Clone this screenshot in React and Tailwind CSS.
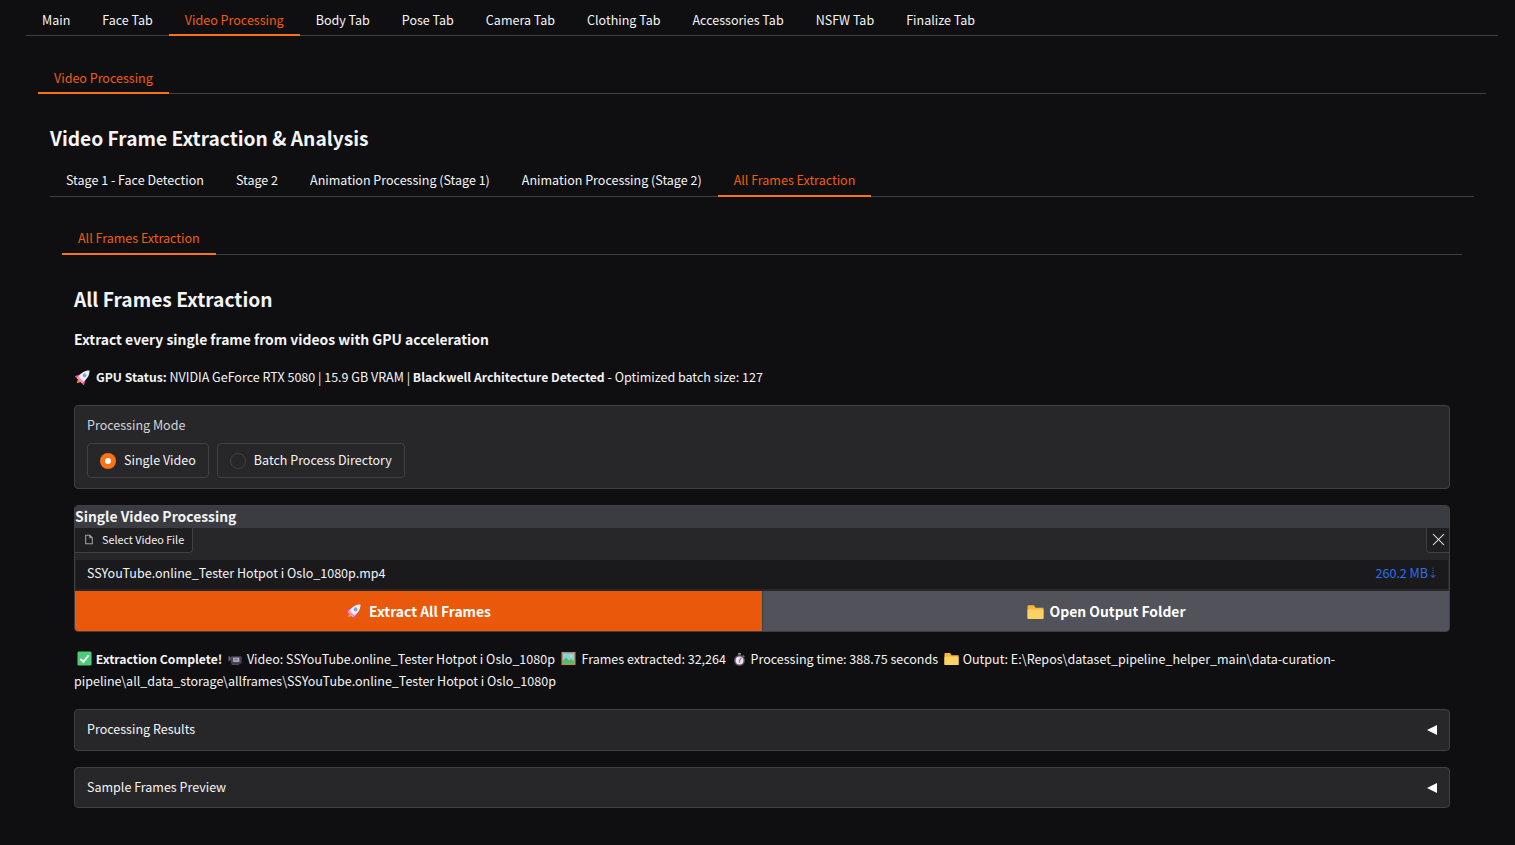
import { X } from "lucide-react";

const Rocket = ({ className }) => (
  <svg viewBox="1 1 14 14" className={className}>
    <g transform="rotate(45 8 8)">
      <path d="M5 7.500 2 13l3.500-.5zM11 7.500l3 5.500-3.500-.5z" fill="#f0468f" />
      <path d="M8 0C5.200 2.500 4.200 6 4.800 12.500h6.400C11.800 6 10.800 2.500 8 0z" fill="#f3eef7" />
      <path d="M4.800 10c-.1.800-.1 1.700 0 2.500h6.400c.1-.8.100-1.700 0-2.500-1.600.8-4.800.8-6.400 0z" fill="#f78fbc" />
      <circle cx="8" cy="6" r="1.700" fill="#7aa7dd" />
      <path d="M6.300 12.500h3.400L8 15.800z" fill="#fb923c" />
    </g>
  </svg>
);

const Check = () => (
  <svg viewBox="0 0 16 16" className="inline-block w-[15px] h-[15px] align-[-2px] ml-[3px] mr-px">
    <rect x="0.500" y="0.500" width="15" height="15" rx="1.500" fill="#4ccb7a" />
    <path d="M3.500 8.500 6.800 11.500 12.500 4.500" fill="none" stroke="#fff" strokeWidth="2" />
  </svg>
);

const Camera = () => (
  <svg viewBox="0 0 16 16" className="inline-block w-[15px] h-[15px] align-[-3px] ml-[3px] mr-px">
    <path d="M0.500 4 3 5.500v3L0.500 10z" fill="#6b6178" />
    <rect x="3" y="4.500" width="11.500" height="8" rx="1" fill="#4a4256" />
    <rect x="5.500" y="6" width="6.500" height="4.500" fill="#b9b2c6" />
    <rect x="6.500" y="7" width="4" height="2" fill="#7d7590" />
    <rect x="4" y="12.500" width="8" height="1.200" fill="#5b5366" />
  </svg>
);

const Picture = () => (
  <svg viewBox="0 0 16 16" className="inline-block w-[15px] h-[15px] align-[-2px] ml-[3px] mr-[3px]">
    <rect x="0.500" y="1" width="15" height="14" fill="#b08d5b" />
    <rect x="2" y="2.500" width="12" height="11" fill="#7fd3ef" />
    <path d="M2 13.500V10l3.500-3 3 3 2-1.500 3.500 2.500v2.500z" fill="#5cb85c" />
    <circle cx="10.500" cy="5.500" r="1.200" fill="#fde047" />
  </svg>
);

const Stopwatch = () => (
  <svg viewBox="0 0 16 16" className="inline-block w-[15px] h-[15px] align-[-3px] ml-[3px] mr-px">
    <rect x="6.500" y="1" width="3" height="2" fill="#8f86a3" />
    <path d="M12 3.200 13.500 4.700 12.600 5.500 11.200 4z" fill="#8f86a3" />
    <circle cx="8" cy="9" r="5.800" fill="#5b5268" />
    <circle cx="8" cy="9" r="4.200" fill="#e9e6ef" />
    <path d="M8 9 10 6M8 9V11.500" stroke="#e0457b" strokeWidth="1.200" />
  </svg>
);

const Folder = ({ className }) => (
  <svg viewBox="0 0 16 16" className={className}>
    <path d="M0.500 3V14a1 1 0 0 0 1 1h13a1 1 0 0 0 1-1V4.500H8L6.500 2H1.500A1 1 0 0 0 0.500 3z" fill="#f5b83d" />
    <path d="M0.500 6h15v8a1 1 0 0 1-1 1h-13a1 1 0 0 1-1-1z" fill="#fdd265" />
  </svg>
);

const Tabs = ({ items, active, className, pad = "pt-1" }) => (
  <div className={`flex border-b border-[#3f3f46] ${className}`}>
    {items.map((t) => (
      <div
        key={t}
        className={
          t === active
            ? `px-4 ${pad} h-[calc(100%+1px)] flex items-center text-[#f15b0d] border-b-2 border-[#f97316]`
            : `px-4 ${pad} h-[calc(100%+1px)] flex items-center text-[#f4f4f5] border-b-2 border-transparent`
        }
      >
        {t}
      </div>
    ))}
  </div>
);

const Radio = ({ label, checked }) => (
  <div className="flex items-center h-[35px] px-3 gap-2 rounded border border-[#3f3f46] bg-[#27272a]">
    {checked ? (
      <div className="w-4 h-4 rounded-full bg-[#f97316] flex items-center justify-center">
        <div className="w-1.5 h-1.5 rounded-full bg-white" />
      </div>
    ) : (
      <div className="w-4 h-4 rounded-full border border-[#3f3f46] bg-[#27272a]" />
    )}
    <span className="text-[#f4f4f5] -mt-[2px]">{label}</span>
  </div>
);

const Accordion = ({ label, className }) => (
  <div className={`flex items-center justify-between pl-3 pr-3 rounded border border-[#3f3f46] bg-[#27272a] ${className}`}>
    <span className="text-[#f4f4f5] -mt-[2px]">{label}</span>
    <span className="w-0 h-0 border-y-[5.500px] border-y-transparent border-r-[10px] border-r-white" />
  </div>
);

const App = () => {
  return (
    <div className="min-h-[845px] bg-[#0f0f11] text-[12.530px] leading-[22px] text-[#f4f4f5] font-['Noto_Sans_CJK_SC',sans-serif] pl-[26px] pr-[17px] overflow-hidden">
      <Tabs
        className="h-[36px]"
        pad="pt-[5px]"
        active="Video Processing"
        items={["Main", "Face Tab", "Video Processing", "Body Tab", "Pose Tab", "Camera Tab", "Clothing Tab", "Accessories Tab", "NSFW Tab", "Finalize Tab"]}
      />

      <div className="px-3 pt-6">
        <Tabs className="h-[34px]" active="Video Processing" items={["Video Processing"]} />

        <div className="px-3 pt-[28px]">
          <h1 className="text-[19.200px] leading-[33px] font-semibold text-[#f4f4f5]">Video Frame Extraction &amp; Analysis</h1>
          <Tabs
            className="h-[35px] mt-[7px]"
            pad="pt-[2px]"
            active="All Frames Extraction"
            items={["Stage 1 - Face Detection", "Stage 2", "Animation Processing (Stage 1)", "Animation Processing (Stage 2)", "All Frames Extraction"]}
          />

          <div className="px-3 pt-6">
            <Tabs className="h-[34px]" pad="pt-[2px]" active="All Frames Extraction" items={["All Frames Extraction"]} />

            <div className="px-3 pt-[28px]">
              <h2 className="text-[19.200px] leading-[33px] font-semibold">All Frames Extraction</h2>
              <p className="mt-[11px] text-[13.900px] leading-[24px] font-semibold">Extract every single frame from videos with GPU acceleration</p>
              <p className="mt-[15px] flex items-center">
                <Rocket className="w-[16px] h-[16px] ml-[1px] mr-[5px]" />
                <span>
                  <b className="font-semibold text-[12.200px]">GPU Status:</b> NVIDIA GeForce RTX 5080 | 15.9 GB VRAM | <b className="font-semibold text-[12.200px]">Blackwell Architecture Detected</b> - Optimized batch size: 127
                </span>
              </p>

              <div className="mt-[17px] h-[84px] rounded border border-[#3f3f46] bg-[#27272a] px-3 pt-[8px]">
                <div className="text-[#d4d4d8]">Processing Mode</div>
                <div className="flex gap-2 mt-[7px]">
                  <Radio label="Single Video" checked />
                  <Radio label="Batch Process Directory" />
                </div>
              </div>

              <div className="mt-4 rounded border border-[#3f3f46] bg-[#27272a] overflow-hidden">
                <div className="h-[22px] bg-[#3b3c42] text-[13.900px] leading-[21px] font-semibold">Single Video Processing</div>
                <div className="flex justify-between h-[25px]">
                  <div className="flex items-center gap-2 pl-[9px] pr-2 pb-[2px] w-[118px] border-r border-b border-[#3f3f46] rounded-br text-[10.800px] whitespace-nowrap bg-[#1f1f22]">
                    <svg viewBox="0 0 24 24" className="w-[10px] h-[11px] shrink-0" fill="none" stroke="#a1a1aa" strokeWidth="2.500">
                      <path d="M4 2h10l6 6v14H4zM14 2v6h6" />
                    </svg>
                    <span>Select Video File</span>
                  </div>
                  <div className="flex items-center justify-center w-[23px] pb-[2px] border-l border-b border-[#3f3f46] rounded-bl bg-[#1f1f22]">
                    <X size={21} strokeWidth={1.200} color="#f4f4f5" />
                  </div>
                </div>
                <div className="mx-px mt-[7px] h-[29px] bg-[#1a1a1d] flex items-center justify-between pl-[11px] pr-[12px] pb-1">
                  <span>SSYouTube.online_Tester Hotpot i Oslo_1080p.mp4</span>
                  <span className="flex items-center gap-[2px] text-[#2f6fed]">
                    260.2 MB
                    <svg viewBox="0 0 8 14" className="w-[6px] h-[12px]" fill="none" stroke="#2f6fed" strokeWidth="1.300">
                      <path d="M4 0v1.500M4 3v1.500M4 6v1.500M4 9v3.500M1 10l3 3 3-3" />
                    </svg>
                  </span>
                </div>
                <div className="grid grid-cols-2 mt-[2px] h-[40px] text-[13.900px] font-semibold">
                  <div className="flex items-center justify-center gap-[7px] bg-[#ea580c] text-white">
                    <Rocket className="w-[16px] h-[16px]" />
                    Extract All Frames
                  </div>
                  <div className="flex items-center justify-center gap-[6px] bg-[#52525b] text-white border-l border-[#3f3f46]">
                    <Folder className="w-[17px] h-[17px]" />
                    Open Output Folder
                  </div>
                </div>
              </div>

              <p className="mt-[16px] text-[#f4f4f5]">
                <Check /> <b className="font-semibold text-[12.200px]">Extraction Complete!</b> <Camera /> Video: SSYouTube.online_Tester Hotpot i Oslo_1080p <Picture /> Frames extracted: 32,264 <Stopwatch /> Processing time: 388.75 seconds <Folder className="inline-block w-[15px] h-[15px] align-[-2px] ml-[3px] mr-px" /> Output: E:\Repos\dataset_pipeline_helper_main\data-curation-pipeline\all_data_storage\allframes\SSYouTube.online_Tester Hotpot i Oslo_1080p
              </p>

              <Accordion className="mt-[17px] h-[42px]" label="Processing Results" />
              <Accordion className="mt-4 h-[41px]" label="Sample Frames Preview" />
            </div>
          </div>
        </div>
      </div>
    </div>
  );
};

export default App;
